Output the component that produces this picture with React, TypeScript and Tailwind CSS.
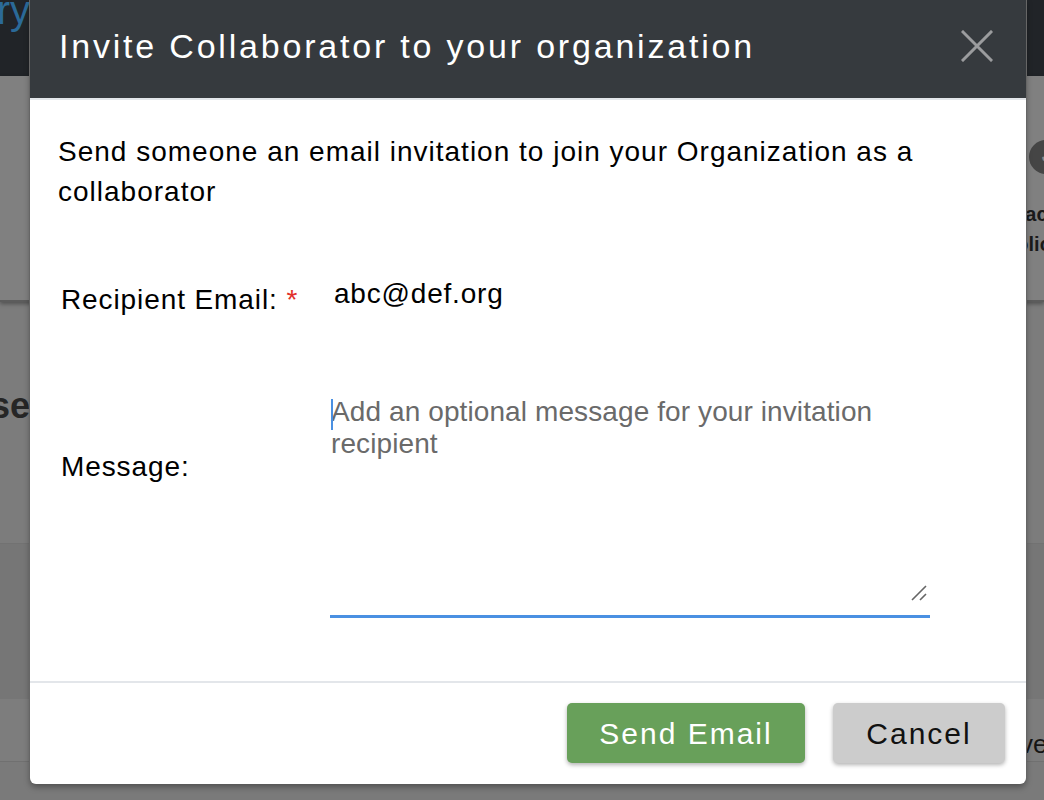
import React from 'react';

function CloseIcon() {
  return (
    <svg width="32" height="32" viewBox="0 0 32 32" fill="none">
      <path d="M2 2 L30 30 M30 2 L2 30" stroke="#9b9c9e" strokeWidth="3" strokeLinecap="square" />
    </svg>
  );
}

function ResizeHandle() {
  return (
    <svg width="18" height="16" viewBox="0 0 18 16" fill="none">
      <path d="M1 15 L15 1 M9 15 L15 9" stroke="#666" strokeWidth="1.6" />
    </svg>
  );
}

function Backdrop() {
  return (
    <div className="flex flex-col h-[800px] bg-[#7c7c7c]">
      {/* top navigation */}
      <div className="h-[76px] bg-[#212428] flex">
        <div className="w-[30px] overflow-hidden flex justify-end">
          <span className="-mt-[14px] text-[40px] leading-[48px] text-[#2b6a98] whitespace-nowrap">Directory</span>
        </div>
      </div>

      {/* first panel */}
      <div className="h-[226px] bg-[#808080] flex justify-end border-b-2 border-[#5c5c5c] shadow-[0_2px_4px_rgba(0,0,0,0.35)]">
        <div className="w-[18px] overflow-hidden flex flex-col pt-[64px]">
          <div className="ml-[3px] w-[34px] h-[34px] rounded-full bg-[#454545] flex items-center justify-center shrink-0">
            <span className="text-[#8a8a8a] text-[16px] font-bold">✓</span>
          </div>
          <div className="-ml-[14px] mt-[25px] text-[20px] leading-[30px] font-bold text-[#1a1a1a] whitespace-nowrap">
            <div>Each</div>
            <div className="-ml-[9px]">Policy</div>
          </div>
        </div>
      </div>

      {/* second panel */}
      <div className="flex-1 flex flex-col">
        <div className="h-[241px] flex">
          <div className="w-[30px] overflow-hidden flex justify-end pt-[84px]">
            <span className="text-[36px] leading-[40px] font-bold text-[#262626] whitespace-nowrap">License</span>
          </div>
        </div>
        <div className="h-[156px] bg-[#767676] border-t border-[#727272]" />
        <div className="h-[62px] bg-[#7d7d7d] flex justify-end">
          <div className="w-[18px] overflow-hidden pt-[30px]">
            <span className="-ml-[6px] block text-[26px] leading-[30px] text-[#151515] whitespace-nowrap">ver</span>
          </div>
        </div>
        <div className="flex-1 bg-[#7a7a7a] border-t border-[#707070]" />
      </div>
    </div>
  );
}

export default function App() {
  return (
    <div className="relative w-[1044px] h-[800px] overflow-hidden font-['Liberation_Sans',Arial,sans-serif]">
      <Backdrop />

      {/* modal */}
      <div className="absolute top-0 left-[30px] w-[996px] bg-white rounded-b-[6px] shadow-[-1px_0_0_#666,1px_0_0_#666,0_3px_6px_rgba(0,0,0,0.35)]">
        <div className="h-[100px] bg-[#363a3e] border-b-2 border-[#e3e6ea] flex items-center justify-between pl-[29px] pr-[33px]">
          <h1 className="-mt-[6px] text-white text-[34px] tracking-[2.8px] font-normal">
            Invite Collaborator to your organization
          </h1>
          <button className="-mt-[6px]">
            <CloseIcon />
          </button>
        </div>

        <div className="px-[28px] pt-[32px]">
          <p className="text-[28px] leading-[40px] tracking-[1px] text-black">
            Send someone an email invitation to join your Organization as a collaborator
          </p>

          <div className="mt-[72px] flex">
            <label className="w-[272px] pl-[3px] text-[28px] leading-[32px] tracking-[0.9px] text-black">
              Recipient Email: <span className="text-[#e2302b]">*</span>
            </label>
            <input
              defaultValue="abc@def.org"
              className="-mt-[6px] w-[600px] h-[32px] px-[4px] text-[28px] tracking-[0.8px] text-black outline-none bg-transparent"
            />
          </div>

          <div className="mt-[80px] flex">
            <label className="w-[272px] pl-[3px] pt-[55px] text-[28px] leading-[32px] tracking-[0.9px] text-black">
              Message:
            </label>
            <div className="relative w-[600px] h-[222px] border-b-[3px] border-[#4a90e2]">
              <textarea
                placeholder="Add an optional message for your invitation recipient"
                className="w-full h-full resize-none outline-none px-[1px] text-[28px] leading-[32px] tracking-[0.1px] text-black placeholder:text-[#6a6a6a]"
              />
              <span className="absolute left-[1px] top-[3px] w-[2px] h-[31px] bg-[#4a90e2]" />
              <span className="absolute right-[1px] bottom-[14px]">
                <ResizeHandle />
              </span>
            </div>
          </div>
        </div>

        <div className="mt-[63px] border-t-2 border-[#e3e6ea] flex justify-end gap-[28px] pt-[20px] pb-[21px] pr-[21px]">
          <button className="w-[238px] h-[60px] rounded-[5px] bg-[#68a05a] text-white text-[30px] tracking-[2px] shadow-[0_2px_4px_rgba(0,0,0,0.3)]">
            Send Email
          </button>
          <button className="w-[172px] h-[60px] rounded-[5px] bg-[#cccccc] text-[#111] text-[30px] tracking-[2px] shadow-[0_2px_4px_rgba(0,0,0,0.3)]">
            Cancel
          </button>
        </div>
      </div>
    </div>
  );
}
